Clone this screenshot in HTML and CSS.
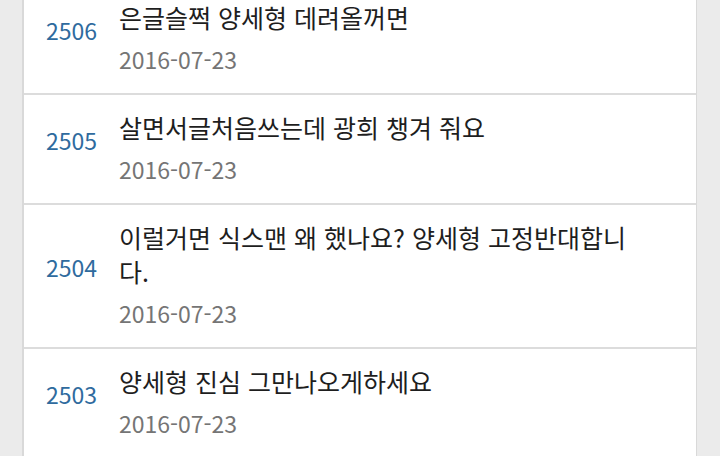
FILE: index.html
```html
<!DOCTYPE html>
<html lang="ko">
<head>
  <meta charset="UTF-8">
  <meta name="viewport" content="width=device-width, initial-scale=1.0">
  <title>게시판</title>
  <link rel="stylesheet" href="styles.css">
</head>
<body>
  <div class="board">
    <ul class="post-list">
      <li class="post">
        <span class="post-no">2506</span>
        <div class="post-body">
          <p class="post-title">은글슬쩍 양세형 데려올꺼면</p>
          <p class="post-date">2016-07-23</p>
        </div>
      </li>
      <li class="post">
        <span class="post-no">2505</span>
        <div class="post-body">
          <p class="post-title">살면서글처음쓰는데 광희 챙겨 줘요</p>
          <p class="post-date">2016-07-23</p>
        </div>
      </li>
      <li class="post">
        <span class="post-no">2504</span>
        <div class="post-body">
          <p class="post-title">이럴거면 식스맨 왜 했나요? 양세형 고정반대합니다.</p>
          <p class="post-date">2016-07-23</p>
        </div>
      </li>
      <li class="post">
        <span class="post-no">2503</span>
        <div class="post-body">
          <p class="post-title">양세형 진심 그만나오게하세요</p>
          <p class="post-date">2016-07-23</p>
        </div>
      </li>
    </ul>
  </div>
</body>
</html>
```

FILE: styles.css
```css
* {
  box-sizing: border-box;
}
body {
  margin: 0;
  font-family: "Noto Sans CJK KR", "Noto Sans", sans-serif;
  background: #ebebeb;
  overflow: hidden;
}
.board {
  display: flow-root;
  margin-left: 22px;
  width: 675px;
  height: 100vh;
  background: #fff;
  border-left: 2px solid #d9d9d9;
  border-right: 1px solid #d9d9d9;
}
/* list is scrolled a little past the first row */
.post-list {
  list-style: none;
  margin: -15px 0 0;
  padding: 0;
}
.post {
  display: flex;
  padding: 17px 64px 17px 0;
  border-bottom: 2px solid #dcdcdc;
}
.post-no {
  flex: 0 0 95px;
  align-self: center;
  padding-bottom: 18px;
  text-align: center;
  font-size: 23px;
  line-height: 34px;
  color: #2f6b9e;
}
.post-body {
  flex: 1;
}
.post-title {
  margin: -2px 0 0;
  font-size: 25px;
  line-height: 34px;
  color: #1e1e1e;
}
.post-date {
  margin: 8px 0 0;
  font-size: 23px;
  line-height: 34px;
  color: #757575;
}
```
